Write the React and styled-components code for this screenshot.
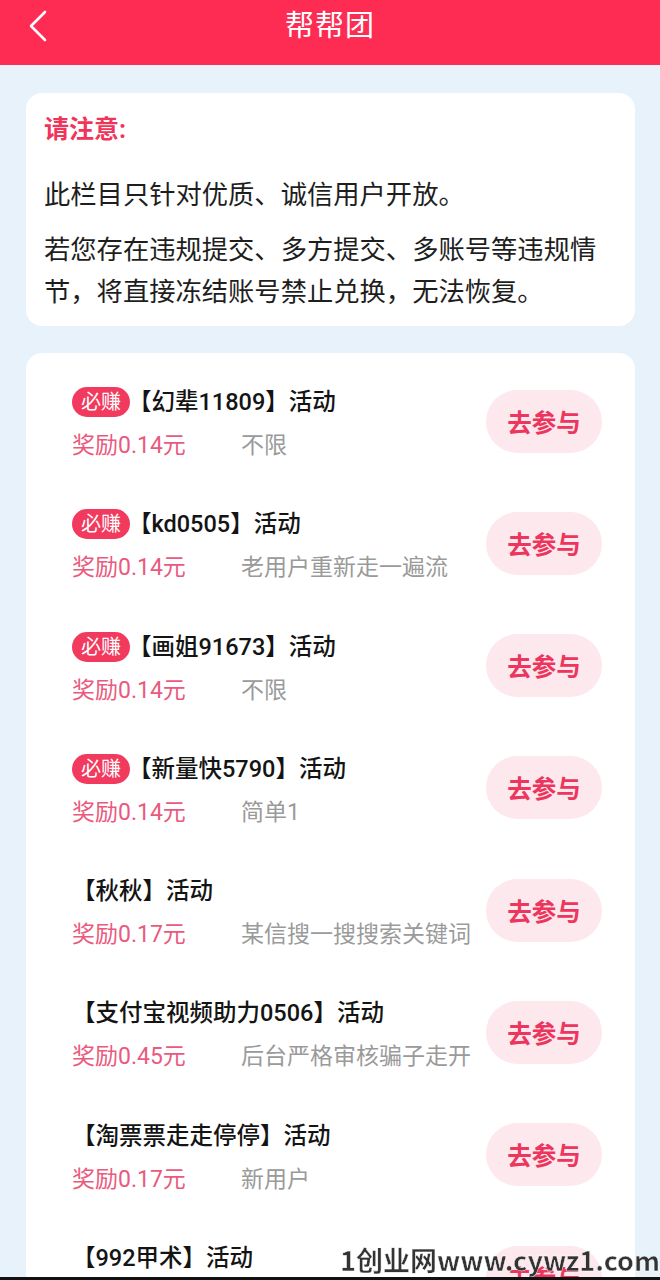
import React from 'react';
import styled, { createGlobalStyle } from 'styled-components';

const GlobalStyle = createGlobalStyle`
  html, body {
    margin: 0;
    padding: 0;
    background: #e7f2fa;
    font-family: Roboto, "Noto Sans CJK SC", sans-serif;
  }
`;

const Page = styled.div`
  min-height: 1280px;
  background: #e7f2fa;
`;

const Header = styled.header`
  height: 65px;
  background: #fe2b53;
  display: flex;
  align-items: center;
  justify-content: center;
  position: relative;
`;

Header.Back = styled.div`
  position: absolute;
  left: 26px;
  top: 10px;
  width: 24px;
  height: 32px;
`;

Header.Title = styled.h1`
  margin: 0;
  margin-top: -20px;
  color: #fff;
  font-size: 29px;
  font-weight: 400;
  letter-spacing: 1px;
`;

const Content = styled.main`
  padding: 28px 25px 0 26px;
  display: flex;
  flex-direction: column;
  gap: 27px;
`;

const Card = styled.section`
  background: #fff;
  border-radius: 16px;
  padding: ${({ $pad }) => $pad};
`;

const Notice = styled.div``;

Notice.Title = styled.div`
  color: #f0345a;
  font-size: 25px;
  font-weight: 700;
  line-height: 34px;
  margin-bottom: 27px;
`;

Notice.Text = styled.p`
  margin: 0;
  color: #1e1e1e;
  font-size: 26.3px;
  line-height: 42px;
  & + & {
    margin-top: 13px;
  }
`;

const Row = styled.div`
  display: flex;
  align-items: center;
  justify-content: space-between;
  padding: 22px 0 22.3px;
`;

Row.Info = styled.div`
  display: flex;
  flex-direction: column;
  gap: 10px;
`;

Row.Title = styled.div`
  display: flex;
  align-items: center;
  color: #141414;
  font-size: 23.5px;
  font-weight: 500;
  line-height: 34px;
  white-space: nowrap;
`;

Row.Badge = styled.span`
  display: inline-block;
  background: #f13a5e;
  color: #fff;
  font-size: 20px;
  font-weight: 400;
  line-height: 30px;
  height: 30px;
  padding: 0 9px;
  border-radius: 15px;
  margin-right: -2px;
`;

Row.Meta = styled.div`
  display: flex;
  align-items: center;
  font-size: 23px;
  line-height: 34px;
`;

Row.Reward = styled.span`
  color: #ea5a7e;
  width: 169px;
  flex-shrink: 0;
`;

Row.Note = styled.span`
  color: #9a9a9a;
`;

const JoinButton = styled.button`
  width: 116px;
  height: 63px;
  border: none;
  border-radius: 32px;
  background: #fde8ed;
  color: #ec365d;
  font-family: inherit;
  font-size: 24.5px;
  font-weight: 700;
  margin-top: -6px;
  cursor: pointer;
`;

const Watermark = styled.div`
  position: fixed;
  right: 0;
  bottom: 3px;
  font-family: "Noto Sans CJK SC", sans-serif;
  font-weight: 700;
  font-size: 27px;
  line-height: 34px;
  color: #333;
  -webkit-text-stroke: 0.4px #fff;
`;

const BottomLine = styled.div`
  position: fixed;
  left: 0;
  right: 0;
  bottom: 0;
  height: 3px;
  background: #111;
`;

const tasks = [
  { hot: true, name: '【幻辈11809】活动', reward: '奖励0.14元', note: '不限' },
  { hot: true, name: '【kd0505】活动', reward: '奖励0.14元', note: '老用户重新走一遍流' },
  { hot: true, name: '【画姐91673】活动', reward: '奖励0.14元', note: '不限' },
  { hot: true, name: '【新量快5790】活动', reward: '奖励0.14元', note: '简单1' },
  { hot: false, name: '【秋秋】活动', reward: '奖励0.17元', note: '某信搜一搜搜索关键词' },
  { hot: false, name: '【支付宝视频助力0506】活动', reward: '奖励0.45元', note: '后台严格审核骗子走开' },
  { hot: false, name: '【淘票票走走停停】活动', reward: '奖励0.17元', note: '新用户' },
  { hot: false, name: '【992甲术】活动', reward: '奖励0.17元', note: '不限' },
];

const BackIcon = () => (
  <svg width="24" height="32" viewBox="0 0 24 32" fill="none">
    <polyline points="19,2 5,16 19,30" stroke="#fff" strokeWidth="2.6" strokeLinecap="round" strokeLinejoin="round" />
  </svg>
);

export default function App() {
  return (
    <Page>
      <GlobalStyle />
      <Header>
        <Header.Back><BackIcon /></Header.Back>
        <Header.Title>帮帮团</Header.Title>
      </Header>
      <Content>
        <Card $pad="20px 22px 13px 18px">
          <Notice>
            <Notice.Title>请注意:</Notice.Title>
            <Notice.Text>此栏目只针对优质、诚信用户开放。</Notice.Text>
            <Notice.Text>若您存在违规提交、多方提交、多账号等违规情节，将直接冻结账号禁止兑换，无法恢复。</Notice.Text>
          </Notice>
        </Card>
        <Card $pad="10px 33px 0 46px">
          {tasks.map((t) => (
            <Row key={t.name}>
              <Row.Info>
                <Row.Title>
                  {t.hot && <Row.Badge>必赚</Row.Badge>}
                  {t.name}
                </Row.Title>
                <Row.Meta>
                  <Row.Reward>{t.reward}</Row.Reward>
                  <Row.Note>{t.note}</Row.Note>
                </Row.Meta>
              </Row.Info>
              <JoinButton>去参与</JoinButton>
            </Row>
          ))}
        </Card>
      </Content>
      <Watermark>1创业网www.cywz1.com</Watermark>
      <BottomLine />
    </Page>
  );
}
